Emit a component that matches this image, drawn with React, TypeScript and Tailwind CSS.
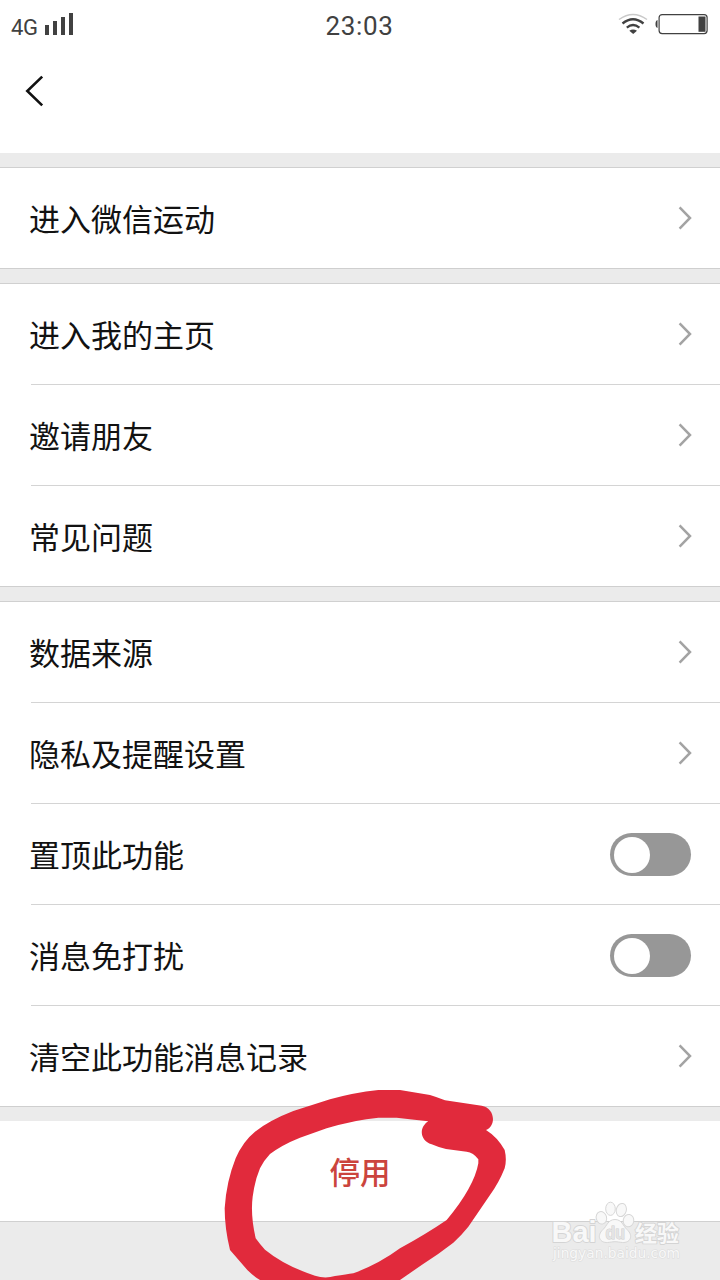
import React from "react";

type RowProps = { label: string; kind?: "link" | "toggle"; last?: boolean };

function Chevron() {
  return (
    <svg className="h-[26px] w-[15px]" viewBox="0 0 15 26" fill="none">
      <path d="M1.6 2.4 12 13 1.6 23.6" stroke="#a3a3a3" strokeWidth="2.5" />
    </svg>
  );
}

function Toggle() {
  return (
    <div className="mt-px flex h-[43px] w-[81px] items-center rounded-full bg-[#979797] pl-[4px]">
      <div className="h-[36px] w-[36px] rounded-full bg-white" />
    </div>
  );
}

function Row({ label, kind = "link", last = false }: RowProps) {
  return (
    <div>
      <div className="flex h-[100px] items-center justify-between pl-[29px]">
        <span className="mb-px text-[31px] leading-[44px] text-[#121212]">{label}</span>
        <div className={kind === "link" ? "mr-[27px]" : "mr-[29px]"}>
          {kind === "link" ? <Chevron /> : <Toggle />}
        </div>
      </div>
      <div className={last ? "h-px bg-[#cfcfcf]" : "ml-[31px] h-px bg-[#d4d4d4]"} />
    </div>
  );
}

function Gap() {
  return <div className="h-[15px] border-b border-[#d0d0d0] bg-[#ebebeb]" />;
}

function StatusBar() {
  return (
    <div className="grid h-[52px] grid-cols-3 items-center font-[Roboto,sans-serif] text-[#414141]">
      <div className="mt-[2px] flex items-start pl-[11px]">
        <span className="mt-[2px] text-[22px] leading-[26px] tracking-[-0.3px]">4G</span>
        <svg className="ml-[7px] h-[22px] w-[29px]" viewBox="0 0 29 22" fill="#414141">
          <path d="M0 12h4v10H0zM8 8h4v14H8zM16 4h4v18h-4zM24 0h4v22h-4z" />
        </svg>
      </div>
      <div className="mr-[1px] text-center text-[26px] leading-[30px] tracking-[0.7px]">23:03</div>
      <div className="flex items-center justify-end pr-[12px]">
        <svg className="mt-[-5px] h-[22px] w-[30px]" viewBox="0 0 30 22" fill="none">
          <path d="M1 6.5Q15-3.5 29 6.5" stroke="#c9c9c9" strokeWidth="1.5" />
          <path d="M4.5 10.5Q15 2 25.5 10.5" stroke="#414141" strokeWidth="2.4" />
          <path d="M8.8 14.6Q15 9.5 21.4 14.6" stroke="#414141" strokeWidth="2.3" />
          <path d="M11.3 17.8Q15 15 19 17.8L15.2 21Z" fill="#414141" />
        </svg>
        <svg className="mt-[-5px] ml-[6px] h-[22px] w-[54px]" viewBox="0 0 54 22">
          <path d="M3.5 7Q1.5 7.5 1.5 11T3.5 15Z" fill="#414141" />
          <rect x="5.1" y="1.6" width="48" height="19" rx="3" fill="white" stroke="#414141" strokeWidth="1.2" />
          <rect x="44.5" y="3.5" width="7" height="15.3" fill="#414141" />
        </svg>
      </div>
    </div>
  );
}

function Brand() {
  return (
    <svg className="absolute top-[1195px] left-[545px] h-[80px] w-[150px]" viewBox="0 0 150 80">
      <g stroke="#d7d7d7" strokeWidth="1" fill="#f8f8f8">
        <ellipse cx="56.4" cy="22.8" rx="5.2" ry="6.3" transform="rotate(-15 56.4 22.8)" />
        <ellipse cx="65.5" cy="13.8" rx="4.8" ry="6.6" />
        <ellipse cx="76.3" cy="15" rx="5" ry="6.7" transform="rotate(15 76.3 15)" />
        <ellipse cx="83.5" cy="25.6" rx="5.3" ry="6.2" transform="rotate(10 83.5 25.6)" />
        <path d="M70 24.5C77 24.5 78 31 82 34.5 89 41 85 48 77.5 47.5 74 47.3 73 46.7 70 46.7S66 47.3 62.5 47.5C55 48 51 41 58 34.5 62 31 63 24.5 70 24.5Z" />
      </g>
      <g fill="#f8f8f8" stroke="#d4d4d4" paintOrder="stroke" strokeWidth="1.8" strokeLinejoin="round" fontWeight="700">
        <text x="6.5" y="46.5" fontFamily="Liberation Sans, sans-serif" fontSize="29" textLength="45" lengthAdjust="spacingAndGlyphs">Bai</text>
        <text x="90" y="46" fontFamily="Noto Sans CJK SC, sans-serif" fontSize="22">经验</text>
      </g>
      <text x="8" y="63" fontFamily="DejaVu Sans, sans-serif" fontSize="14" fill="#f8f8f8" stroke="#dcdcdc" strokeWidth="1.2" paintOrder="stroke" textLength="127" lengthAdjust="spacingAndGlyphs">jingyan.baidu.com</text>
      <text x="60.5" y="44" fontFamily="Liberation Sans, sans-serif" fontSize="18" fontWeight="700" fill="#e4e4e4" stroke="#cfcfcf" strokeWidth="1" paintOrder="stroke" textLength="19.5" lengthAdjust="spacingAndGlyphs">du</text>
    </svg>
  );
}

export default function App() {
  return (
    <div className="relative flex h-[1280px] w-[720px] flex-col overflow-hidden bg-white font-['Noto_Sans_CJK_SC',sans-serif]">
      <StatusBar />
      <header className="flex h-[101px] items-start pt-[23px] pl-[25px]">
        <svg className="h-[32px] w-[19px]" viewBox="0 0 19 32" fill="none">
          <path d="M17.2 1.6 2.3 16 17.2 30.4" stroke="#111" strokeWidth="2.6" />
        </svg>
      </header>
      <Gap />
      <Row label="进入微信运动" last />
      <Gap />
      <Row label="进入我的主页" />
      <Row label="邀请朋友" />
      <Row label="常见问题" last />
      <Gap />
      <Row label="数据来源" />
      <Row label="隐私及提醒设置" />
      <Row label="置顶此功能" kind="toggle" />
      <Row label="消息免打扰" kind="toggle" />
      <Row label="清空此功能消息记录" last />
      <div className="h-[14px] bg-[#ebebeb]" />
      <div className="flex h-[100px] items-center justify-center text-[30.5px] font-medium text-[#cb443d]">
        <span className="mt-px">停用</span>
      </div>
      <div className="flex-1 border-t border-[#d0d0d0] bg-[#ebebeb]" />
      <svg className="absolute top-[1080px] left-[210px] h-[200px] w-[310px]" viewBox="0 0 930 600">
        <path
          fill="#e12a3c"
          fillRule="evenodd"
          d="M150 600Q130 588 112 570L60 510Q44 445 44 385 49 305 77 235 98 185 135 155 180 120 250 93L360 58Q430 38 505 30H570L660 45Q680 51 705 61L815 77C855 83 860 138 828 150Q862 171 884 210 891 240 884 265 866 310 840 345L775 440Q755 465 730 488 685 523 635 555L570 600ZM137 475Q149 492 165 509 225 558 315 587 345 597 375 588 410 583 430 580 505 553 570 505 650 461 710 420 752 370 775 328 799 285 805 250V238Q790 217 770 215L708 207Q685 202 665 193C630 182 625 143 655 124Q605 118 560 113H505Q435 119 350 145L270 173Q215 195 180 222 160 243 150 265 134 303 128 350 121 405 137 475Z"
        />
      </svg>
      <Brand />
    </div>
  );
}
